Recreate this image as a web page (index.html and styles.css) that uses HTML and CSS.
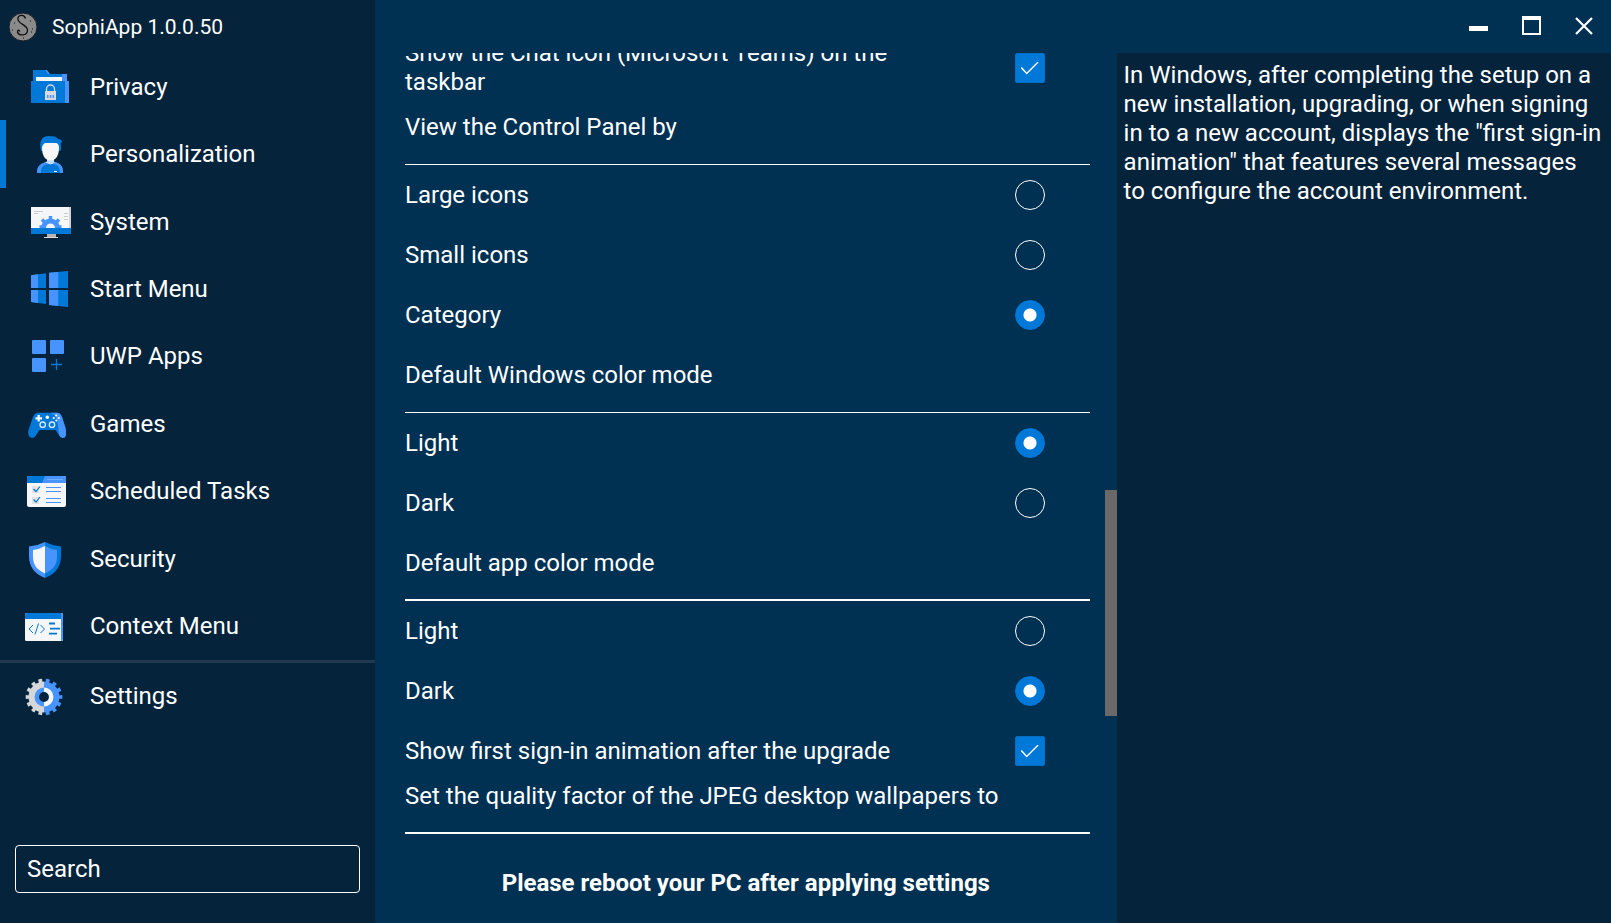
FILE: index.html
```html
<!DOCTYPE html>
<html lang="en">
<head>
<meta charset="utf-8">
<title>SophiApp 1.0.0.50</title>
<link rel="stylesheet" href="styles.css">
</head>
<body>
<div class="app">
  <aside class="sidebar">
    <header class="brand">
      <svg class="brand-logo" viewBox="0 0 30 30" aria-hidden="true">
        <circle cx="15" cy="15" r="14" fill="#8a8a8a" stroke="#151c24" stroke-width="1"/>
        <path d="M17.500 6.500C16.500 2 9.500 2.500 10 7.500C10.500 12 19.500 13 19.500 18C19.500 24.500 10.500 24 9.500 20C9.500 17.500 12 18 11.500 19.500" fill="none" stroke="#101010" stroke-width="1.300"/>
        <path d="M4 18h1M24 17h1M23 20h1M6 11h1M15 26h1M22 9h1" fill="none" stroke="#101010"/>
      </svg>
      <h1 class="brand-name">SophiApp 1.0.0.50</h1>
    </header>
    <nav class="nav">
      <a class="nav-item" href="#privacy">
        <svg class="nav-icon" viewBox="0 0 60 60" aria-hidden="true">
          <path d="M18 13h12l4 4h18v9H18z" fill="#0078d7"/>
          <path d="M30 13h2l3 4h-2zM47 17h5v9h-5z" fill="#4894fe"/>
          <path d="M21 20h26v5H21z" fill="#f2f5f7"/>
          <path d="M16 24h38v22H16z" fill="#0078d7"/>
          <path d="M50 24h4v22h-4z" fill="#4894fe"/>
          <path d="M31.500 35v-3a4 4 0 0 1 8 0v3" fill="none" stroke="#d9dadd" stroke-width="1.300"/>
          <path d="M30 34h11v9H30z" fill="#d9dadd"/>
          <path d="M32 38h1.500v3H32zM34.800 38h1.500v3h-1.500zM37.500 38H39v3h-1.500z" fill="#4894fe"/>
        </svg>
        <span>Privacy</span>
      </a>
      <a class="nav-item active" href="#personalization" aria-current="page">
        <svg class="nav-icon" viewBox="0 0 60 60" aria-hidden="true">
          <path d="M26 27c-2-9 0-15 8-15 5 0 8 1 9 3q4 0 4 3c-2 1-1 3-1 5s0 3-1 4z" fill="#0078d7"/>
          <path d="M32 34h7v7h-7z" fill="#c5dafc"/>
          <path d="M27 24c0-3 2-5 4-5h9c3 0 4 2 4 5 0 7-3 12.500-8.500 12.500S27 31 27 24z" fill="#f7f7f7"/>
          <path d="M22 49c0-7 3-9 9-11 3 3 6 3 9 0 6 2 8 4 8 11z" fill="#0078d7"/>
          <path d="M22 49c0-7 3-9 9-11l2 2c-5 1-7 3-7 9zM48 49c0-7-2-9-8-11l-2 2c5 1 7 3 7 9z" fill="#4894fe"/>
          <path d="M31 37.500c2 1 6 1 8 0l1 1-4.500 2-5-2z" fill="#c5dafc"/>
          <path d="M39 47h3v1h-3z" fill="#fff"/>
        </svg>
        <span>Personalization</span>
      </a>
      <a class="nav-item" href="#system">
        <svg class="nav-icon" viewBox="0 0 60 60" aria-hidden="true">
          <path d="M16 15h40v22H16z" fill="#f5f6f8"/>
          <path d="M54 15h2v21h-2z" fill="#d2d3d6"/>
          <path d="M19 19.500h9M19 21.500h4M49 21.500h4M49 24.500h4M49 27.500h4" stroke="#c8cace" fill="none"/>
          <g fill="none" stroke="#4894fe">
            <path d="M28.500 36a7 7 0 0 1 14 0" stroke-width="5"/>
            <path d="M35.500 27v-3M29.200 29.700l-2.200-2.200M41.800 29.700l2.200-2.200M27 35h-2.500M44 35h2.500" stroke-width="3.500"/>
          </g>
          <path d="M32 42h9v3h-9z" fill="#b9b4b0"/>
          <path d="M29 45h14v1H29z" fill="#dddbd8"/>
          <path d="M16 36h40v6H16z" fill="#0078d7"/>
        </svg>
        <span>System</span>
      </a>
      <a class="nav-item" href="#start-menu">
        <svg class="nav-icon" viewBox="0 0 60 60" aria-hidden="true">
          <path d="M16 16.300L31 14.300V29H16zM34 13.700L53 12V29H34zM16 31h15v14L16 43zM34 31h19v17l-19-2z" fill="#0078d7"/>
          <path d="M16 16.300l7-1V29h-7zM34 13.700l9.300-.8V29H34zM16 31h7v13l-7-1zM34 31h9.300v16L34 46z" fill="#4894fe"/>
        </svg>
        <span>Start Menu</span>
      </a>
      <a class="nav-item" href="#uwp-apps">
        <svg class="nav-icon" viewBox="0 0 60 60" aria-hidden="true">
          <g fill="#4894fe">
            <rect x="17" y="14" width="14" height="14" rx="1"/>
            <rect x="35" y="14" width="14" height="14" rx="1"/>
            <rect x="17" y="32" width="14" height="14" rx="1"/>
          </g>
          <path d="M36 38.500h11M41.500 33v11" stroke="#0078d7" stroke-width="1.300"/>
        </svg>
        <span>UWP Apps</span>
      </a>
      <a class="nav-item" href="#games">
        <svg class="nav-icon" viewBox="0 0 60 60" aria-hidden="true">
          <path d="M18 23Q19.500 18.700 23 18.700H42Q45.500 18.700 47 23L50.500 34Q52.500 44 47.500 44Q45.500 44 44 41L40.500 36H24.500L20.500 42Q19 44 17.500 44Q12 43 13.500 36Z" fill="#0078d7"/>
          <path d="M36 18.700H42Q45.500 18.700 47 23L50.500 34Q52.500 44 47.500 44Q45.500 44 44 41L43 31Q42 21 36 18.700Z" fill="#4894fe"/>
          <path d="M20.500 24.300h6.500M23.700 21v6.500" stroke="#fff" stroke-width="2.200"/>
          <circle cx="32.300" cy="23.300" r="1.700" fill="#fff"/>
          <g fill="#0078d7" stroke="#d9eafd" stroke-width="1.300"><circle cx="27.700" cy="30.700" r="2.700"/><circle cx="37" cy="30.700" r="2.700"/></g>
          <g fill="#fff"><circle cx="41.300" cy="21.500" r="1.100"/><circle cx="41.300" cy="26.500" r="1.100"/><circle cx="38.800" cy="24" r="1.100"/><circle cx="43.800" cy="24" r="1.100"/></g>
        </svg>
        <span>Games</span>
      </a>
      <a class="nav-item" href="#scheduled-tasks">
        <svg class="nav-icon" viewBox="0 0 60 60" aria-hidden="true">
          <rect x="12" y="15" width="39" height="31" rx="2" fill="#f5f6f8"/>
          <path d="M12 22v-5q0-2 2-2h35q2 0 2 2v5z" fill="#4894fe"/>
          <path d="M12 22v-5q0-2 2-2h16l-3 7z" fill="#0078d7"/>
          <path d="M32 18.500h16" stroke="#73adfb"/>
          <path d="M17 25h7v7h-7zM17 36h7v7h-7z" fill="#e1e3e6"/>
          <path d="M18.500 28l2.500 2.500 4-5M18.500 38.500l2.500 2.500 4-5" fill="none" stroke="#0078d7" stroke-width="1.200"/>
          <path d="M31 26.500h15M31 30.500h15M31 37.500h15M31 41.500h15" stroke="#4894fe"/>
        </svg>
        <span>Scheduled Tasks</span>
      </a>
      <a class="nav-item" href="#security">
        <svg class="nav-icon" viewBox="0 0 60 60" aria-hidden="true">
          <path d="M30 13Q22 17 14 17.500V27C14 38 20 45 30 49z" fill="#4894fe"/>
          <path d="M30 13Q38 17 46 17.500V27C46 38 40 45 30 49z" fill="#0078d7"/>
          <path d="M30 17Q24 20.500 18 21V28C18 36 22 41 30 44.500z" fill="#f5f6f8"/>
          <path d="M30 17Q36 20.500 42 21V28C42 36 38 41 30 44.500z" fill="#4894fe"/>
        </svg>
        <span>Security</span>
      </a>
      <a class="nav-item" href="#context-menu">
        <svg class="nav-icon" viewBox="0 0 60 60" aria-hidden="true">
          <rect x="10" y="17" width="38" height="28" rx="1.500" fill="#f5f6f8"/>
          <path d="M10 23v-4q0-2 2-2h34v6z" fill="#0078d7"/>
          <path d="M46 17q2 0 2 2v24q0 2-2 2z" fill="#4894fe"/>
          <path d="M18 29l-4 4 4 4M25.500 29l4 4-4 4M23.500 27.500l-3.500 11" fill="none" stroke="#0078d7"/>
          <path d="M34 27.500h6M35 32.700h10M34 37.700h8" stroke="#0078d7" stroke-width="1.800"/>
        </svg>
        <span>Context Menu</span>
      </a>
    </nav>
    <div class="settings">
      <a class="nav-item" href="#settings">
        <svg class="nav-icon" viewBox="0 0 60 60" aria-hidden="true">
          <defs>
            <clipPath id="gear-left"><path d="M0 0h29v60H0z"/></clipPath>
            <clipPath id="gear-right"><path d="M29 0h31v60H29z"/></clipPath>
          </defs>
          <g clip-path="url(#gear-left)" fill="none" stroke="#d6d7da">
            <circle cx="29" cy="31" r="12" stroke-width="7"/>
            <circle cx="29" cy="31" r="16.500" stroke-width="3.600" pathLength="28" stroke-dasharray="1 1" stroke-dashoffset="0.500"/>
            <circle cx="29" cy="31" r="7.200" stroke="#4894fe" stroke-width="4.500"/>
          </g>
          <g clip-path="url(#gear-right)" fill="none" stroke="#4894fe">
            <circle cx="29" cy="31" r="12" stroke-width="7"/>
            <circle cx="29" cy="31" r="16.500" stroke-width="3.600" pathLength="28" stroke-dasharray="1 1" stroke-dashoffset="0.500"/>
            <circle cx="29" cy="31" r="7.200" stroke="#f5f6f8" stroke-width="4.500"/>
          </g>
        </svg>
        <span>Settings</span>
      </a>
    </div>
    <input class="search" type="text" placeholder="Search" aria-label="Search">
  </aside>

  <div class="workspace">
    <header class="titlebar">
      <button class="window-button" type="button" aria-label="Minimize">
        <svg class="window-icon" viewBox="0 0 20 20"><path d="M1 11h19v5H1z" fill="#fff"/></svg>
      </button>
      <button class="window-button" type="button" aria-label="Maximize">
        <svg class="window-icon" viewBox="0 0 20 20"><path d="M1 1h19v19H1zM3 5v13h15V5z" fill="#fff" fill-rule="evenodd"/></svg>
      </button>
      <button class="window-button" type="button" aria-label="Close">
        <svg class="window-icon" viewBox="0 0 20 20"><path d="M2 3l16 16M18 3L2 19" stroke="#fff" stroke-width="2.200"/></svg>
      </button>
    </header>

    <main class="content">
      <div class="viewport">
        <div class="options">
          <label class="option check"><span>Show the Chat icon (Microsoft Teams) on the taskbar</span><input class="checkbox" type="checkbox" checked></label>
          <section class="group" role="radiogroup" aria-labelledby="panel-view">
            <h2 class="group-title" id="panel-view">View the Control Panel by</h2>
            <label class="option"><span>Large icons</span><input class="radio" type="radio" name="panel-view"></label>
            <label class="option"><span>Small icons</span><input class="radio" type="radio" name="panel-view"></label>
            <label class="option"><span>Category</span><input class="radio" type="radio" name="panel-view" checked></label>
          </section>
          <section class="group" role="radiogroup" aria-labelledby="windows-mode">
            <h2 class="group-title" id="windows-mode">Default Windows color mode</h2>
            <label class="option"><span>Light</span><input class="radio" type="radio" name="windows-mode" checked></label>
            <label class="option"><span>Dark</span><input class="radio" type="radio" name="windows-mode"></label>
          </section>
          <section class="group" role="radiogroup" aria-labelledby="app-mode">
            <h2 class="group-title thick" id="app-mode">Default app color mode</h2>
            <label class="option"><span>Light</span><input class="radio" type="radio" name="app-mode"></label>
            <label class="option"><span>Dark</span><input class="radio" type="radio" name="app-mode" checked></label>
          </section>
          <label class="option check"><span>Show first sign-in animation after the upgrade</span><input class="checkbox" type="checkbox" checked></label>
          <h2 class="group-title thick">Set the quality factor of the JPEG desktop wallpapers to</h2>
        </div>
        <div class="scrollbar" aria-hidden="true"><div class="thumb"></div></div>
      </div>
      <p class="notice">Please reboot your PC after applying settings</p>
    </main>

    <aside class="description">
      <p>In Windows, after completing the setup on a new installation, upgrading, or when signing in to a new account, displays the "first sign-in animation" that features several messages to configure the account environment.</p>
    </aside>
  </div>
</div>
</body>
</html>
```

FILE: styles.css
```css
:root {
  --panel: #05243c;
  --surface: #003153;
  --accent: #0078d7;
  --bar: 53px;
}

* { box-sizing: border-box; }

body {
  margin: 0;
  background: var(--surface);
  color: #fff;
  font: 24px/29px Roboto, sans-serif;
}

h1, h2, p { margin: 0; font-weight: 400; }
h2 { font-size: 24px; }

.app {
  display: grid;
  grid-template: minmax(0, 1fr) / 375px minmax(0, 1fr);
  height: 100vh;
}

.sidebar {
  display: flex;
  flex-direction: column;
  background: var(--panel);
}

.brand {
  display: flex;
  align-items: center;
  gap: 14px;
  height: var(--bar);
  padding-left: 8px;
}
.brand-logo { width: 30px; height: 30px; }
.brand-name { font-size: 21px; line-height: 30px; }

.nav {
  display: grid;
  grid-auto-rows: 1fr;
  height: 607px;
}
.nav-item {
  display: flex;
  align-items: center;
  gap: 15px;
  padding-left: 9px;
  border-left: 6px solid transparent;
  color: inherit;
  text-decoration: none;
  line-height: 30px;
}
.nav-item.active { border-left-color: var(--accent); }
.nav-icon { width: 60px; height: 60px; }
.settings {
  padding: 3px 0;
  border-top: 3px solid #20394f;
}

.search {
  height: 48px;
  margin: auto 15px 30px;
  padding: 0 11px;
  border: 1px solid #fff;
  border-radius: 4px;
  background: transparent;
  color: #fff;
  font: inherit;
}
.search::placeholder { color: #fff; opacity: 1; }

.workspace {
  display: grid;
  grid-template: var(--bar) minmax(0, 1fr) / minmax(0, 3fr) minmax(0, 2fr);
}
.titlebar {
  grid-column: 1 / -1;
  display: flex;
  justify-content: flex-end;
}
.window-button {
  display: grid;
  place-items: center;
  width: 53px;
  padding: 0 0 3px;
  border: 0;
  background: transparent;
}
.window-icon { width: 20px; height: 20px; }

.content {
  display: grid;
  grid-template-rows: minmax(0, 1fr) 80px;
}
.viewport {
  display: flex;
  gap: 15px;
  padding-left: 30px;
  overflow: hidden;
}
.options {
  flex: 1;
  display: flex;
  flex-direction: column;
  justify-content: flex-end;
  padding-bottom: 9px;
}
.group, .group-title, .option { flex-shrink: 0; }
.group-title {
  height: 68px;
  padding-top: 16px;
  border-bottom: 1px solid #fff;
}
.group-title.thick { border-bottom-width: 2px; }
.option {
  display: grid;
  grid-template-columns: minmax(0, 1fr) 30px;
  gap: 70px;
  align-items: center;
  min-height: 60px;
  padding-right: 45px;
}
.option.check {
  min-height: 45px;
  padding-top: 15px;
}
.option.check:first-child { padding-top: 0; }

.radio, .checkbox {
  appearance: none;
  display: grid;
  place-items: center;
  width: 30px;
  height: 30px;
  margin: 0;
}
.radio {
  border: 1px solid #fff;
  border-radius: 50%;
}
.radio:checked {
  border-color: var(--accent);
  background: radial-gradient(circle, #fff 6px, var(--accent) 7px);
}
.checkbox {
  border: 1px solid #056ec2;
  border-radius: 2px;
  background: var(--accent);
}
.checkbox:checked::before {
  content: "";
  width: 18px;
  height: 13px;
  background: #fff;
  clip-path: polygon(0 50%, 7% 42%, 34% 84%, 95% 0, 100% 7%, 34% 100%);
}

.scrollbar {
  display: grid;
  grid-template-rows: 437fr 226fr 127fr;
  width: 12px;
}
.thumb { grid-row: 2; background: #696969; }

.notice {
  align-self: center;
  text-align: center;
  font-weight: 700;
}

.description {
  padding: 8px 9px 8px 7px;
  background: var(--panel);
}
```
